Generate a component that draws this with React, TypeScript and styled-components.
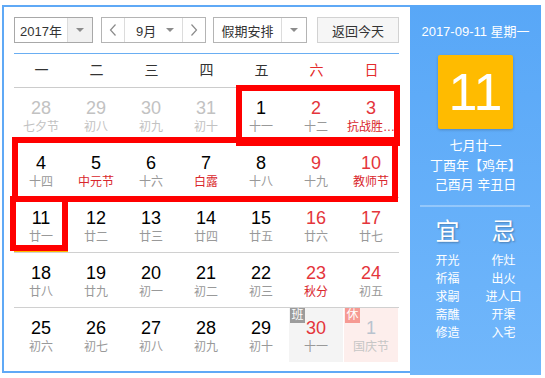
import React from 'react';
import styled, { createGlobalStyle } from 'styled-components';

interface Day {
  d: number;
  l: string;
  red?: boolean;
  fest?: boolean;
  other?: boolean;
  sel?: boolean;
  badge?: 'work' | 'rest';
}

const weeks: Day[][] = [
  [
    { d: 28, l: '七夕节', other: true },
    { d: 29, l: '初八', other: true },
    { d: 30, l: '初九', other: true },
    { d: 31, l: '初十', other: true },
    { d: 1, l: '十一' },
    { d: 2, l: '十二', red: true },
    { d: 3, l: '抗战胜…', red: true, fest: true },
  ],
  [
    { d: 4, l: '十四' },
    { d: 5, l: '中元节', fest: true },
    { d: 6, l: '十六' },
    { d: 7, l: '白露', fest: true },
    { d: 8, l: '十八' },
    { d: 9, l: '十九', red: true },
    { d: 10, l: '教师节', red: true, fest: true },
  ],
  [
    { d: 11, l: '廿一', sel: true },
    { d: 12, l: '廿二' },
    { d: 13, l: '廿三' },
    { d: 14, l: '廿四' },
    { d: 15, l: '廿五' },
    { d: 16, l: '廿六', red: true },
    { d: 17, l: '廿七', red: true },
  ],
  [
    { d: 18, l: '廿八' },
    { d: 19, l: '廿九' },
    { d: 20, l: '初一' },
    { d: 21, l: '初二' },
    { d: 22, l: '初三' },
    { d: 23, l: '秋分', red: true, fest: true },
    { d: 24, l: '初五', red: true },
  ],
  [
    { d: 25, l: '初六' },
    { d: 26, l: '初七' },
    { d: 27, l: '初八' },
    { d: 28, l: '初九' },
    { d: 29, l: '初十' },
    { d: 30, l: '十一', red: true, badge: 'work' },
    { d: 1, l: '国庆节', other: true, badge: 'rest' },
  ],
];

const weekNames = ['一', '二', '三', '四', '五', '六', '日'];
const yi = ['开光', '祈福', '求嗣', '斋醮', '修造'];
const ji = ['作灶', '出火', '进人口', '开渠', '入宅'];

// annotation frames drawn over the screenshot
const marks = [
  { left: 236, top: 85, width: 164, height: 61 },
  { left: 12, top: 137, width: 386, height: 65 },
  { left: 10, top: 196, width: 58, height: 55 },
];

const Chevron = ({ dir }: { dir: 'l' | 'r' }) => (
  <svg width="8" height="14" viewBox="0 0 8 14">
    <polyline
      points={dir === 'l' ? '6.5,1.5 1.5,7 6.5,12.5' : '1.5,1.5 6.5,7 1.5,12.5'}
      fill="none"
      stroke="#8a8a8a"
      strokeWidth="1.2"
    />
  </svg>
);

export default function App(): JSX.Element {
  return (
    <Page>
      <GlobalStyle />
      <Calendar>
        <Main>
          <Toolbar>
            <YearSelect>
              <SelectLabel>2017年</SelectLabel>
              <CaretBox $shade>
                <Caret />
              </CaretBox>
            </YearSelect>
            <MonthGroup>
              <NavBtn>
                <Chevron dir="l" />
              </NavBtn>
              <MonthLabel>
                <span>9月</span>
                <Caret />
              </MonthLabel>
              <NavBtn $last>
                <Chevron dir="r" />
              </NavBtn>
            </MonthGroup>
            <HolidaySelect>
              <SelectLabel>假期安排</SelectLabel>
              <CaretBox>
                <Caret />
              </CaretBox>
            </HolidaySelect>
            <TodayButton>返回今天</TodayButton>
          </Toolbar>
          <BlueRule />
          <WeekHeader>
            {weekNames.map((w, i) => (
              <WeekName key={w} $red={i > 4}>
                {w}
              </WeekName>
            ))}
          </WeekHeader>
          {weeks.map((row, ri) => (
            <WeekRow key={ri} $last={ri === weeks.length - 1}>
              {row.map((c, ci) => (
                <Cell key={`${ri}_${ci}`} $sel={c.sel} $badge={c.badge}>
                  {c.badge && <Badge $kind={c.badge}>{c.badge === 'work' ? '班' : '休'}</Badge>}
                  <DayNum className={c.other ? (c.badge ? 'next' : 'other') : c.red ? 'red' : ''}>
                    {c.d}
                  </DayNum>
                  <Lunar className={c.other ? (c.badge ? 'nextFest' : 'other') : c.fest ? 'fest' : ''}>
                    {c.l}
                  </Lunar>
                </Cell>
              ))}
            </WeekRow>
          ))}
        </Main>
        <Side>
          <DateLine>2017-09-11 星期一</DateLine>
          <BigDay>11</BigDay>
          <LunarInfo>
            <div>七月廿一</div>
            <div>丁酉年【鸡年】</div>
            <div>己酉月 辛丑日</div>
          </LunarInfo>
          <SideRule />
          <Almanac>
            <AlmanacCol>
              <AlmanacHead>宜</AlmanacHead>
              {yi.map((t) => (
                <AlmanacItem key={t}>{t}</AlmanacItem>
              ))}
            </AlmanacCol>
            <AlmanacCol>
              <AlmanacHead>忌</AlmanacHead>
              {ji.map((t) => (
                <AlmanacItem key={t}>{t}</AlmanacItem>
              ))}
            </AlmanacCol>
          </Almanac>
        </Side>
      </Calendar>
      {marks.map((m, i) => (
        <Mark key={i} style={m} />
      ))}
    </Page>
  );
}

const GlobalStyle = createGlobalStyle`
  html, body {
    margin: 0;
    padding: 0;
    background: #fff;
  }
  body {
    font-family: "Liberation Sans", "Noto Sans CJK SC", sans-serif;
    color: #333;
  }
`;

const Page = styled.div`
  position: relative;
  width: 545px;
  height: 378px;
  padding: 5px 0 0 2px;
  box-sizing: border-box;
  overflow: hidden;
`;

const Calendar = styled.div`
  display: flex;
  align-items: flex-start;
`;

const Main = styled.div`
  width: 408px;
  box-sizing: border-box;
  border: 2px solid #5fa9f6;
  border-right: none;
  padding: 10px 11px 8px 10px;
`;

const Toolbar = styled.div`
  display: flex;
  height: 26px;
  font-size: 13px;
`;

const YearSelect = styled.div`
  display: flex;
  width: 79px;
  box-sizing: border-box;
  border: 1px solid #a8a8a8;
  background: #fff;
`;

const SelectLabel = styled.div`
  flex: 1;
  display: flex;
  align-items: center;
  justify-content: center;
  color: #333;
`;

const CaretBox = styled.div<{ $shade?: boolean }>`
  width: 24px;
  display: flex;
  align-items: center;
  justify-content: center;
  border-left: 1px solid #dcdcdc;
  background: ${(p) => (p.$shade ? '#f1f1f1' : '#fff')};
`;

const Caret = styled.i`
  width: 0;
  height: 0;
  border-left: 4px solid transparent;
  border-right: 4px solid transparent;
  border-top: 4px solid #8c8c8c;
`;

const MonthGroup = styled.div`
  display: flex;
  width: 105px;
  margin-left: 8px;
  box-sizing: border-box;
  border: 1px solid #b4b4b4;
`;

const NavBtn = styled.div<{ $last?: boolean }>`
  width: 22px;
  display: flex;
  align-items: center;
  justify-content: center;
  border-right: ${(p) => (p.$last ? 'none' : '1px solid #dcdcdc')};
  border-left: ${(p) => (p.$last ? '1px solid #dcdcdc' : 'none')};
`;

const MonthLabel = styled.div`
  flex: 1;
  display: flex;
  align-items: center;
  justify-content: space-between;
  padding: 0 8px 0 11px;
`;

const HolidaySelect = styled.div`
  display: flex;
  width: 94px;
  margin-left: 7px;
  box-sizing: border-box;
  border: 1px solid #b4b4b4;
`;

const TodayButton = styled.div`
  width: 82px;
  margin-left: 10px;
  box-sizing: border-box;
  border: 1px solid #d2d2d2;
  background: #f6f6f6;
  display: flex;
  align-items: center;
  justify-content: center;
  color: #333;
`;

const BlueRule = styled.div`
  height: 1px;
  margin-top: 10px;
  background: #6aaef2;
`;

const WeekHeader = styled.div`
  display: grid;
  grid-template-columns: repeat(7, 55px);
  height: 34px;
  box-sizing: border-box;
  border-bottom: 1px solid #cccccc;
`;

const WeekName = styled.div<{ $red?: boolean }>`
  text-align: center;
  line-height: 33px;
  font-size: 14px;
  color: ${(p) => (p.$red ? '#e42b2b' : '#333')};
`;

const WeekRow = styled.div<{ $last?: boolean }>`
  display: grid;
  grid-template-columns: repeat(7, 55px);
  height: 55px;
  box-sizing: border-box;
  border-bottom: ${(p) => (p.$last ? 'none' : '1px solid #d0d0d0')};
`;

const Cell = styled.div<{ $sel?: boolean; $badge?: 'work' | 'rest' }>`
  position: relative;
  text-align: center;
  padding-top: 9px;
  box-sizing: border-box;
  height: 54px;
  border-right: 1px solid transparent;
  background-clip: padding-box;
  background-color: ${(p) =>
    p.$badge === 'work' ? '#f4f4f4' : p.$badge === 'rest' ? '#fdeeec' : 'transparent'};
  box-shadow: ${(p) => (p.$sel ? 'inset 0 0 0 2px #ffbb00' : 'none')};
`;

const Badge = styled.span<{ $kind: 'work' | 'rest' }>`
  position: absolute;
  top: 0;
  left: 1px;
  width: 15px;
  height: 15px;
  line-height: 15px;
  font-size: 12px;
  text-align: center;
  color: #fff;
  background: ${(p) => (p.$kind === 'work' ? '#9c9c9c' : '#f69a93')};
`;

const DayNum = styled.div`
  font-size: 18px;
  line-height: 22px;
  color: #000;

  &.red {
    color: #e4353b;
  }
  &.other {
    color: #c2c2c2;
  }
  &.next {
    color: #b9c3cf;
  }
`;

const Lunar = styled.div`
  font-size: 12px;
  line-height: 16px;
  color: #999;
  white-space: nowrap;

  &.fest {
    color: #d9262c;
  }
  &.other {
    color: #c2c2c2;
  }
  &.nextFest {
    color: #c6c6c6;
  }
`;

const Side = styled.div`
  width: 131px;
  height: 370px;
  box-sizing: border-box;
  padding-top: 18px;
  background: linear-gradient(180deg, #58a7f7 0%, #71b7fb 100%);
  color: #fff;
  text-align: center;
`;

const DateLine = styled.div`
  font-size: 13px;
  line-height: 18px;
`;

const BigDay = styled.div`
  width: 75px;
  height: 74px;
  margin: 14px auto 0;
  border-radius: 2px;
  background: #ffbb00;
  box-shadow: 0 1px 3px rgba(0, 0, 0, 0.2);
  font-size: 52px;
  line-height: 74px;
  color: #fff;
`;

const LunarInfo = styled.div`
  margin-top: 7px;
  font-size: 13px;
  line-height: 19.5px;
`;

const SideRule = styled.div`
  height: 2px;
  margin: 10px 11px 0 10px;
  background: rgba(255, 255, 255, 0.3);
`;

const Almanac = styled.div`
  display: grid;
  grid-template-columns: 56px 56px;
  justify-content: center;
  margin-top: 10px;
`;

const AlmanacCol = styled.div`
  display: flex;
  flex-direction: column;
  align-items: center;
`;

const AlmanacHead = styled.div`
  font-size: 24px;
  line-height: 30px;
  margin-bottom: 5px;
  text-shadow: 1px 1px 2px rgba(0, 0, 0, 0.3);
`;

const AlmanacItem = styled.div`
  font-size: 12px;
  line-height: 18px;
`;

const Mark = styled.div`
  position: absolute;
  box-sizing: border-box;
  border: 6px solid #ff0000;
`;
